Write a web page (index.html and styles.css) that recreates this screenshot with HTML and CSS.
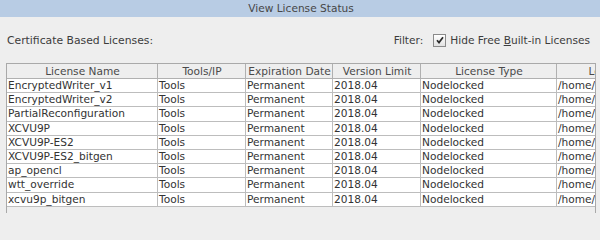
FILE: index.html
```html
<!DOCTYPE html>
<html>
<head>
<meta charset="utf-8">
<link rel="stylesheet" href="styles.css">
</head>
<body>
<div class="window">
  <div class="titlebar">View License Status</div>
  <div class="toolbar">
    <span class="label">Certificate Based Licenses:</span>
    <div class="filter">
      <span class="filter-label">Filter:</span>
      <span class="checkbox">
        <svg width="10" height="10" viewBox="0 0 10 10"><path d="M2 5.2 L4 7.6 L8 2.2" fill="none" stroke="#2b2b2b" stroke-width="1.7"/></svg>
      </span>
      <span class="filter-text">Hide Free <u>B</u>uilt-in Licenses</span>
    </div>
  </div>
  <div class="pane">
    <table class="grid">
      <colgroup>
        <col class="c1"><col class="c2"><col class="c3"><col class="c4"><col class="c5"><col class="c6">
      </colgroup>
      <thead>
        <tr><th>License Name</th><th>Tools/IP</th><th>Expiration Date</th><th>Version Limit</th><th>License Type</th><th>Location</th></tr>
      </thead>
      <tbody>
        <tr><td>EncryptedWriter_v1</td><td>Tools</td><td>Permanent</td><td>2018.04</td><td>Nodelocked</td><td>/home/</td></tr>
        <tr><td>EncryptedWriter_v2</td><td>Tools</td><td>Permanent</td><td>2018.04</td><td>Nodelocked</td><td>/home/</td></tr>
        <tr><td>PartialReconfiguration</td><td>Tools</td><td>Permanent</td><td>2018.04</td><td>Nodelocked</td><td>/home/</td></tr>
        <tr><td>XCVU9P</td><td>Tools</td><td>Permanent</td><td>2018.04</td><td>Nodelocked</td><td>/home/</td></tr>
        <tr><td>XCVU9P-ES2</td><td>Tools</td><td>Permanent</td><td>2018.04</td><td>Nodelocked</td><td>/home/</td></tr>
        <tr><td>XCVU9P-ES2_bitgen</td><td>Tools</td><td>Permanent</td><td>2018.04</td><td>Nodelocked</td><td>/home/</td></tr>
        <tr><td>ap_opencl</td><td>Tools</td><td>Permanent</td><td>2018.04</td><td>Nodelocked</td><td>/home/</td></tr>
        <tr><td>wtt_override</td><td>Tools</td><td>Permanent</td><td>2018.04</td><td>Nodelocked</td><td>/home/</td></tr>
        <tr><td>xcvu9p_bitgen</td><td>Tools</td><td>Permanent</td><td>2018.04</td><td>Nodelocked</td><td>/home/</td></tr>
      </tbody>
    </table>
  </div>
</div>
</body>
</html>
```

FILE: styles.css
```css
html, body {
  margin: 0;
  padding: 0;
  height: 213px;
  background: #eeeeee;
  overflow: hidden;
}
.window {
  width: 600px;
  height: 213px;
  display: flex;
  flex-direction: column;
  font-family: "DejaVu Sans", sans-serif;
  font-size: 10.6px;
  color: #3c3c3c;
  background: #eeeeee;
}
.titlebar {
  height: 17px;
  line-height: 17px;
  background: #b8cce4;
  text-align: center;
  color: #474747;
  flex: none;
  padding-left: 2px;
  box-sizing: border-box;
}
.toolbar {
  display: flex;
  justify-content: space-between;
  align-items: center;
  height: 46px;
  padding: 0 10px 0 7px;
  box-sizing: border-box;
  flex: none;
}
.label {
  font-size: 10.8px;
}
.filter {
  display: flex;
  align-items: center;
}
.filter-label {
  margin-right: 10px;
}
.checkbox {
  width: 11px;
  height: 11px;
  border: 1px solid #8a8a8a;
  background: linear-gradient(#ffffff, #e2e2e2);
  display: flex;
  align-items: center;
  justify-content: center;
  margin-right: 4px;
}
.checkbox svg {
  display: block;
}
.pane {
  margin-left: 6px;
  width: 590px;
  flex: 1;
  border: 1px solid #a9a9a9;
  border-bottom: none;
  overflow: hidden;
  background: #eeeeee;
  box-sizing: border-box;
}
.grid {
  border-collapse: separate;
  border-spacing: 0;
  table-layout: fixed;
  width: 658px;
}
.c1 { width: 151px; }
.c2 { width: 88px; }
.c3 { width: 87px; }
.c4 { width: 88px; }
.c5 { width: 136px; }
.c6 { width: 108px; }
.grid th, .grid td {
  box-sizing: border-box;
  border-right: 1px solid #bdbdbd;
  border-bottom: 1px solid #bdbdbd;
  padding: 0 0 0 1px;
  white-space: nowrap;
  overflow: hidden;
  text-align: left;
  font-weight: normal;
}
.grid th {
  height: 15px;
  line-height: 14px;
  text-align: center;
  background: #eeeeee;
  color: #4a4a4a;
  border-color: #b0b0b0;
}
.grid td {
  height: 14.2px;
  line-height: 13px;
  background: #ffffff;
  color: #333333;
}
```
